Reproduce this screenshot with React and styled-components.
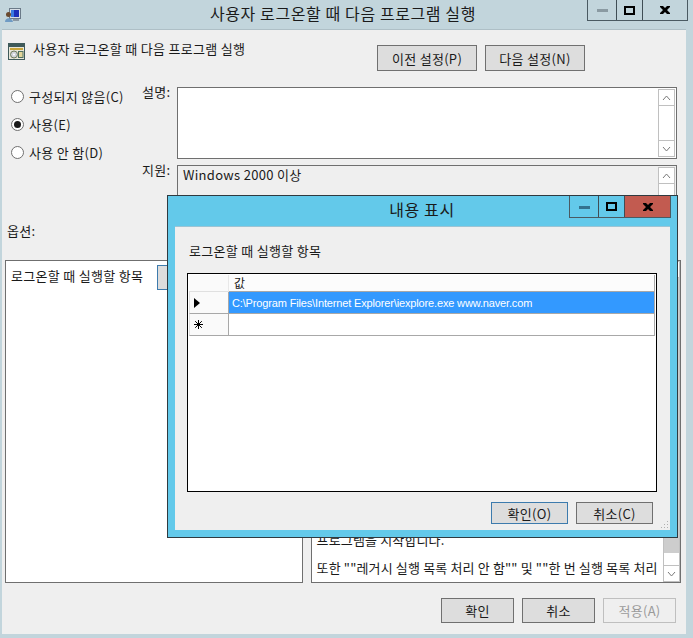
import React from "react";
import styled, { createGlobalStyle } from "styled-components";

const FONT = `"Noto Sans CJK KR", "Liberation Sans", sans-serif`;

const Global = createGlobalStyle`
  html, body {
    margin: 0;
    padding: 0;
    background: #c2d5dc;
    overflow: hidden;
  }
  * { box-sizing: border-box; }
`;

const Screen = styled.div`
  position: relative;
  width: 693px;
  height: 638px;
  background: #c2d5dc;
  font-family: ${FONT};
  font-size: 13px;
  letter-spacing: 0.3px;
  color: #1a1a1a;
  overflow: hidden;
`;

const TitleBar = styled.div`
  height: 29px;
  display: flex;
  position: relative;
  align-items: flex-start;
  padding-left: 5px;
`;

const TitleIcon = styled.div`
  margin-top: 8px;
  line-height: 0;
`;

const WinTitle = styled.div`
  flex: 1;
  text-align: center;
  font-size: 16px;
  letter-spacing: 0.6px;
  line-height: 27px;
  padding-left: 78px;
`;

const WinButtons = styled.div`
  display: flex;
  height: ${p => p.$h}px;
  margin-right: ${p => p.$right}px;
  border: 1px solid #4a5a62;
  border-top: none;
`;

const WinButton = styled.div`
  width: ${p => p.$w}px;
  display: flex;
  align-items: center;
  justify-content: center;
  background: ${p => p.$bg || "transparent"};
  & + & { border-left: 1px solid #3f4d55; }
`;

const Client = styled.div`
  margin: 0 7px 0 2px;
  height: 605px;
  background: #efefef;
  border-top: 1px solid #aebfc6;
  padding: 13px 5px 0 3px;
`;

const Header = styled.div`
  display: flex;
  height: 30px;
  align-items: flex-start;
  padding-left: 3px;
`;

const HeaderText = styled.div`
  margin-left: 8px;
  line-height: 16px;
  margin-top: -2px;
`;

const HeaderButtons = styled.div`
  margin-left: auto;
  display: flex;
  gap: 8px;
  margin-right: 96px;
  margin-top: 2px;
`;

const Button = styled.div`
  width: ${p => p.$w}px;
  height: ${p => p.$h}px;
  display: flex;
  align-items: center;
  justify-content: center;
  border: 1px solid ${p => (p.$focus ? "#3d7bad" : p.$off ? "#bfbfbf" : "#707070")};
  color: ${p => (p.$off ? "#9a9a9a" : "#1a1a1a")};
  background: ${p => (p.$off ? "#efefef" : "#dddddd")};
`;

const Upper = styled.div`
  display: flex;
  margin-top: 14px;
  height: 135px;
`;

const Radios = styled.div`
  width: 137px;
  padding: 0 0 0 6px;
  display: flex;
  flex-direction: column;
  gap: 10px;
`;

const RadioRow = styled.div`
  display: flex;
  align-items: center;
  height: 18px;
  gap: 5px;
`;

const RadioDot = styled.span`
  width: 13px;
  height: 13px;
  border-radius: 50%;
  border: 1px solid #707070;
  background: #fff;
  display: flex;
  align-items: center;
  justify-content: center;
  &::after {
    content: "";
    width: 7px;
    height: 7px;
    border-radius: 50%;
    background: ${p => (p.$on ? "#1a1a1a" : "transparent")};
  }
`;

const Fields = styled.div`
  flex: 1;
  display: flex;
  flex-direction: column;
  gap: 6px;
`;

const FieldRow = styled.div`
  display: flex;
`;

const FieldLabel = styled.div`
  width: 35px;
  text-align: right;
  padding-right: 9px;
  line-height: 16px;
  margin-top: -3px;
  white-space: nowrap;
`;

const Box = styled.div`
  position: relative;
  width: 500px;
  height: ${p => p.$h}px;
  background: ${p => p.$bg};
  border: 1px solid #6f6f6f;
  padding: 1px 5px;
  line-height: 16px;
`;

const ScrollBar = styled.div`
  position: absolute;
  top: 1px;
  right: 1px;
  bottom: 1px;
  width: 17px;
  display: flex;
  flex-direction: column;
  background: #fff;
`;

const ScrollArrow = styled.div`
  height: 17px;
  border: 1px solid #c0c0c0;
  background: ${p => p.$bg || "#fff"};
  display: flex;
  align-items: center;
  justify-content: center;
`;

const ScrollTrack = styled.div`
  flex: 1;
  border-left: 1px solid #c0c0c0;
  border-right: 1px solid #c0c0c0;
  background: #fff;
`;

const OptionLabel = styled.div`
  margin-top: 1px;
  padding-left: 2px;
  line-height: 16px;
  height: 37px;
`;

const Panels = styled.div`
  display: flex;
  gap: 8px;
`;

const Panel = styled.div`
  position: relative;
  width: ${p => p.$w}px;
  height: 323px;
  background: #fff;
  border: 1px solid #6f6f6f;
  overflow: hidden;
`;

const OptionRow = styled.div`
  display: flex;
  align-items: center;
  height: 25px;
  margin-top: 4px;
  padding-left: 5px;
`;

const OptionText = styled.span`
  margin-bottom: 5px;
`;

const OptionInput = styled.div`
  margin-left: 14px;
  width: 90px;
  height: 25px;
  background: #dddddd;
  border: 1px solid #3d7bad;
`;

const HelpText = styled.div`
  position: absolute;
  left: 5px;
  right: 22px;
  bottom: 6px;
  line-height: 16px;
  letter-spacing: 0.15px;
  display: flex;
  flex-direction: column;
  gap: 12px;
  white-space: nowrap;
`;

const HelpScroll = styled(ScrollBar)`
  top: 0;
  right: 0;
  bottom: 0;
`;

const HelpThumb = styled.div`
  height: 275px;
  background: #cdcdcd;
  border-left: 1px solid #c0c0c0;
  border-right: 1px solid #c0c0c0;
`;

const Footer = styled.div`
  display: flex;
  justify-content: flex-end;
  gap: 8px;
  margin-top: 15px;
  margin-right: 5px;
`;

const Dialog = styled.div`
  position: absolute;
  left: 167px;
  top: 195px;
  width: 511px;
  height: 343px;
  background: #63c9ea;
  border: 1px solid #2f3a40;
  padding: 0 7px 7px 7px;
  display: flex;
  flex-direction: column;
`;

const DialogTitleBar = styled.div`
  display: flex;
  height: 30px;
  flex: none;
`;

const DialogTitle = styled.div`
  flex: 1;
  text-align: center;
  line-height: 27px;
  font-size: 16px;
  letter-spacing: 0.6px;
  padding-left: 100px;
`;

const DialogBody = styled.div`
  position: relative;
  flex: 1;
  background: #efefef;
  border-top: 1px solid #9cc4d4;
  padding: 16px 12px 0 12px;
`;

const DialogCaption = styled.div`
  line-height: 16px;
  height: 30px;
  padding-left: 2px;
`;

const Table = styled.div`
  width: 470px;
  height: 219px;
  background: #fff;
  border: 1px solid #000;
  padding: 1px;
`;

const TableRow = styled.div`
  display: grid;
  grid-template-columns: 40px 1fr;
  height: ${p => p.$h}px;
`;

const RowHead = styled.div`
  background: #fafafa;
  border-right: 1px solid ${p => (p.$plain ? "#e8e8e8" : "#a8a8a8")};
  border-bottom: 1px solid ${p => (p.$plain ? "#e0e0e0" : "#a8a8a8")};
  border-left: ${p => (p.$plain ? "0" : "1px solid #e0e0e0")};
  display: flex;
  align-items: center;
  padding-left: 4px;
`;

const Cell = styled.div`
  background: ${p => (p.$on ? "#3399ff" : p.$head ? "#fcfcfc" : "#fff")};
  color: ${p => (p.$on ? "#fff" : "#1a1a1a")};
  border-bottom: 1px solid #a8a8a8;
  border-right: 1px solid #a8a8a8;
  font-family: ${p => (p.$on ? `"Liberation Sans", sans-serif` : FONT)};
  font-size: ${p => (p.$on ? 11 : 12)}px;
  letter-spacing: ${p => (p.$on ? "-0.15px" : "0")};
  line-height: ${p => p.$h + 1}px;
  padding-left: ${p => (p.$head ? 5 : 3)}px;
  white-space: nowrap;
  overflow: hidden;
`;

const DialogFooter = styled.div`
  display: flex;
  justify-content: flex-end;
  gap: 8px;
  margin-top: 10px;
  margin-right: 5px;
`;

const Grip = styled.svg`
  position: absolute;
  right: 1px;
  bottom: 1px;
`;

function UserIcon() {
  return (
    <svg width="16" height="15" viewBox="0 0 16 15">
      <rect x="4.5" y="0.5" width="11" height="10" fill="#d8dfe6" stroke="#6b7a88" />
      <rect x="6" y="2" width="8" height="7" fill="#1c2fb8" />
      <rect x="6" y="2" width="3" height="7" fill="#3a7be0" />
      <rect x="8" y="11" width="6" height="2" fill="#8a97a3" />
      <circle cx="3.5" cy="6.5" r="2.5" fill="#6a4a30" />
      <path d="M0 14 C0 9 7 9 8 14 Z" fill="#6f9bc4" />
    </svg>
  );
}

function PolicyIcon() {
  return (
    <svg width="17" height="17" viewBox="0 0 17 17">
      <rect x="0.5" y="0.5" width="16" height="16" fill="#e8e6d8" stroke="#3f5a5a" />
      <rect x="1" y="1" width="15" height="3" fill="#3f5a5a" />
      <rect x="2" y="5" width="13" height="2" fill="#c9a53a" />
      <circle cx="6" cy="11.5" r="3.5" fill="#cfd2d8" stroke="#6d7a5a" />
      <circle cx="6" cy="11.5" r="1" fill="#fff" />
      <rect x="10.5" y="8.5" width="4.5" height="6" fill="#e2d59a" stroke="#4f6f5f" />
    </svg>
  );
}

const Min = ({ c }) => (
  <svg width="11" height="4" viewBox="0 0 11 4">
    <rect width="11" height="3" fill={c} y="1" />
  </svg>
);
const Max = () => (
  <svg width="11" height="9" viewBox="0 0 11 9">
    <rect x="1" y="1" width="9" height="7" fill="none" stroke="#000" strokeWidth="2" />
  </svg>
);
const Close = () => (
  <svg width="10" height="8" viewBox="0 0 10 8">
    <path d="M0 0h3l2 2 2-2h3v1L7 4l3 3v1H7L5 6 3 8H0V7l3-3-3-3z" fill="#000" />
  </svg>
);
const Chevron = ({ down }) => (
  <svg width="9" height="6" viewBox="0 0 9 6">
    <path d={down ? "M1 1l3.5 4L8 1" : "M1 5l3.5-4L8 5"} fill="none" stroke="#7a7a7a" strokeWidth="1" />
  </svg>
);

const Bars = () => (
  <ScrollBar>
    <ScrollArrow><Chevron /></ScrollArrow>
    <ScrollTrack />
    <ScrollArrow><Chevron down /></ScrollArrow>
  </ScrollBar>
);

export default function App() {
  return (
    <Screen>
      <Global />
      <TitleBar>
        <TitleIcon><UserIcon /></TitleIcon>
        <WinTitle>사용자 로그온할 때 다음 프로그램 실행</WinTitle>
        <WinButtons $h={21} $right={5}>
          <WinButton $w={28}><Min c="#8a9aa2" /></WinButton>
          <WinButton $w={26}><Max /></WinButton>
          <WinButton $w={45}><Close /></WinButton>
        </WinButtons>
      </TitleBar>
      <Client>
        <Header>
          <PolicyIcon />
          <HeaderText>사용자 로그온할 때 다음 프로그램 실행</HeaderText>
          <HeaderButtons>
            <Button $w={100} $h={26}>이전 설정(P)</Button>
            <Button $w={100} $h={26}>다음 설정(N)</Button>
          </HeaderButtons>
        </Header>
        <Upper>
          <Radios>
            <RadioRow><RadioDot />구성되지 않음(C)</RadioRow>
            <RadioRow><RadioDot $on />사용(E)</RadioRow>
            <RadioRow><RadioDot />사용 안 함(D)</RadioRow>
          </Radios>
          <Fields>
            <FieldRow>
              <FieldLabel>설명:</FieldLabel>
              <Box $h={72} $bg="#fff"><Bars /></Box>
            </FieldRow>
            <FieldRow>
              <FieldLabel>지원:</FieldLabel>
              <Box $h={50} $bg="#efefef">Windows 2000 이상<Bars /></Box>
            </FieldRow>
          </Fields>
        </Upper>
        <OptionLabel>옵션:</OptionLabel>
        <Panels>
          <Panel $w={298}>
            <OptionRow>
              <OptionText>로그온할 때 실행할 항목</OptionText>
              <OptionInput />
            </OptionRow>
          </Panel>
          <Panel $w={371}>
            <HelpText>
              <div>프로그램을 시작합니다.</div>
              <div>또한 ""레거시 실행 목록 처리 안 함"" 및 ""한 번 실행 목록 처리</div>
            </HelpText>
            <HelpScroll>
              <ScrollArrow $bg="#fff"><Chevron /></ScrollArrow>
              <HelpThumb />
              <ScrollTrack />
              <ScrollArrow><Chevron down /></ScrollArrow>
            </HelpScroll>
          </Panel>
        </Panels>
        <Footer>
          <Button $w={73} $h={25}>확인</Button>
          <Button $w={73} $h={25}>취소</Button>
          <Button $w={73} $h={25} $off>적용(A)</Button>
        </Footer>
      </Client>
      <Dialog>
        <DialogTitleBar>
          <DialogTitle>내용 표시</DialogTitle>
          <WinButtons $h={22} $right={-1}>
            <WinButton $w={28}><Min c="#33728f" /></WinButton>
            <WinButton $w={26}><Max /></WinButton>
            <WinButton $w={46} $bg="#c25b50"><Close /></WinButton>
          </WinButtons>
        </DialogTitleBar>
        <DialogBody>
          <DialogCaption>로그온할 때 실행할 항목</DialogCaption>
          <Table>
            <TableRow $h={17}>
              <RowHead $plain />
              <Cell $head $h={15}>값</Cell>
            </TableRow>
            <TableRow $h={22}>
              <RowHead>
                <svg width="6" height="10" viewBox="0 0 6 10"><path d="M0 0l6 5-6 5z" fill="#000" /></svg>
              </RowHead>
              <Cell $on $h={22}>C:\Program Files\Internet Explorer\iexplore.exe www.naver.com</Cell>
            </TableRow>
            <TableRow $h={22}>
              <RowHead>
                <svg width="9" height="9" viewBox="0 0 9 9">
                  <path d="M4.5 0v9M0 4.5h9M1.2 1.2l6.6 6.6M7.8 1.2L1.2 7.8" stroke="#000" strokeWidth="1" />
                </svg>
              </RowHead>
              <Cell $h={22} />
            </TableRow>
          </Table>
          <DialogFooter>
            <Button $w={77} $h={22} $focus>확인(O)</Button>
            <Button $w={77} $h={22}>취소(C)</Button>
          </DialogFooter>
          <Grip width="9" height="9" viewBox="0 0 9 9">
            <path d="M7 1h1v1H7zM4 4h1v1H4zM7 4h1v1H7zM1 7h1v1H1zM4 7h1v1H4zM7 7h1v1H7z" fill="#b0b0b0" />
          </Grip>
        </DialogBody>
      </Dialog>
    </Screen>
  );
}
